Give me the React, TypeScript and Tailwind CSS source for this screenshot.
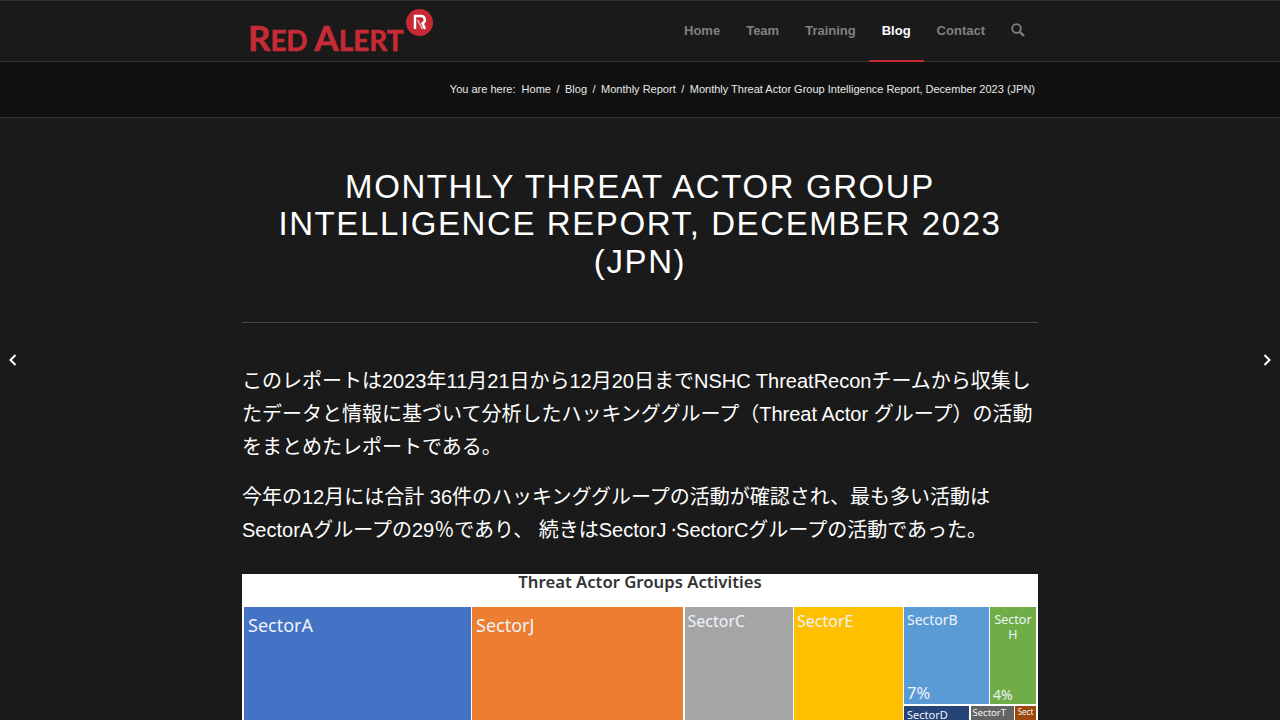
import React from "react";

const sans = "font-['Liberation_Sans','Noto_Sans_CJK_JP',sans-serif]";

function Logo() {
  return (
    <div className="relative h-[61px] w-[200px] ml-[8px] shrink-0">
      <div className="absolute left-[-2px] top-[14px] flex items-baseline font-['Lato','Liberation_Sans',sans-serif] font-bold text-[#c62b35] leading-[44px] whitespace-nowrap [-webkit-text-stroke:0.6px_#c62b35]">
        <span className="text-[35px]">R</span>
        <span className="text-[28px] tracking-[-0.3px]">ED</span>
        <span className="text-[35px] ml-[7px]">A</span>
        <span className="text-[28px]">LERT</span>
      </div>
      <svg className="absolute left-[156px] top-[8px]" width="27" height="27" viewBox="0 0 27 27">
        <circle cx="13.5" cy="13.5" r="13.5" fill="#c62b35" />
        <path d="M9 20V7h6a3.8 3.8 0 0 1 1.5 7.3L19 20" fill="none" stroke="#fff" strokeWidth="2.4" />
        <path d="M11.5 11l5 9" stroke="#e9b7ba" strokeWidth="1.5" />
      </svg>
    </div>
  );
}

function NavItem({ label, active }: { label: string; active?: boolean }) {
  return (
    <div
      className={`h-[61px] px-[13px] flex items-center border-b-2 ${
        active ? "border-[#c62b35] text-white" : "border-transparent text-[#808080]"
      } text-[13px] font-bold`}
    >
      {label}
    </div>
  );
}

function Tile({
  label,
  cls,
  text = "text-[18px]",
  pct,
  pctCls = "text-[16.5px]",
}: {
  label: string;
  cls: string;
  text?: string;
  pct?: string;
  pctCls?: string;
}) {
  return (
    <div className={`relative overflow-hidden leading-none ${cls} ${text}`}>
      <div className="whitespace-pre-line">{label}</div>
      {pct && <div className={`absolute left-[3px] bottom-[2px] leading-none ${pctCls}`}>{pct}</div>}
    </div>
  );
}

function Treemap() {
  return (
    <div className="w-[796px] h-[146px] bg-white shrink-0 font-['Noto_Sans','Open_Sans',sans-serif]">
      <div className="h-[33px] text-center text-[#333] text-[16.7px] font-semibold leading-[16px]">
        Threat Actor Groups Activities
      </div>
      <div className="flex gap-[1.5px] pl-[2px] pr-[2px] h-[113px] text-[#eef3fb]">
        <Tile label="SectorA" cls="w-[226.5px] bg-[#4472c4] pt-[9px] px-[4px]" />
        <Tile label="SectorJ" cls="w-[211px] bg-[#ed7d31] pt-[9px] px-[4px]" />
        <Tile label="SectorC" cls="w-[108px] bg-[#a5a5a5] px-[3px]" text="text-[16px] pt-[6px]" />
        <Tile label="SectorE" cls="w-[108.5px] bg-[#ffc000] px-[3px]" text="text-[16px] pt-[6px]" />
        <div className="flex-1 flex flex-col gap-[2px] min-w-0">
          <div className="flex gap-[1.5px] h-[98px]">
            <Tile label="SectorB" cls="w-[84.5px] bg-[#5b9bd5] pt-[6px] px-[3px]" text="text-[14px]" pct="7%" />
            <Tile
              label={"Sector\nH"}
              cls="flex-1 bg-[#70ad47] pt-[5px] text-center !leading-[15px]"
              text="text-[12.5px]"
              pct="4%"
              pctCls="text-[14px]"
            />
          </div>
          <div className="flex gap-[1.5px] flex-1">
            <Tile label="SectorD" cls="w-[65px] bg-[#264478] pt-[3px] px-[3px]" text="text-[11px]" />
            <Tile label="SectorT" cls="w-[43px] bg-[#636363] pt-[2px] px-[2px]" text="text-[9.5px]" />
            <Tile label="Sect" cls="flex-1 bg-[#9e480e] pt-[2px] text-center" text="text-[8px]" />
          </div>
        </div>
      </div>
    </div>
  );
}

function Side({ left }: { left?: boolean }) {
  return (
    <div
      className={`absolute top-[305px] ${
        left ? "left-0" : "right-0"
      } w-[30px] h-[110px] bg-[#191919] flex items-center ${left ? "justify-start pl-[9px]" : "justify-end pr-[9px]"}`}
    >
      <svg width="8" height="12" viewBox="0 0 8 12" fill="none" stroke="#fff" strokeWidth="2">
        <path d={left ? "M6.5 1L1.5 6l5 5" : "M1.5 1l5 5-5 5"} />
      </svg>
    </div>
  );
}

export default function App() {
  return (
    <div className={`relative w-[1280px] h-[720px] overflow-hidden bg-[#1a1a1a] text-white ${sans}`}>
      <header className="h-[62px] border-t border-b border-[#333333] bg-[#1a1a1a]">
        <div className="w-[796px] mx-auto flex justify-between h-[61px]">
          <Logo />
          <nav className="flex items-start -mr-[1px]">
            <NavItem label="Home" />
            <NavItem label="Team" />
            <NavItem label="Training" />
            <NavItem label="Blog" active />
            <NavItem label="Contact" />
            <div className="h-[60px] w-[41px] pl-[13px] flex items-center text-[#808080]">
              <svg width="14" height="14" viewBox="0 0 14 14" fill="none" stroke="currentColor" className="mb-[2px]">
                <circle cx="5.5" cy="5.5" r="4.3" strokeWidth="1.8" />
                <path d="M8.8 8.8L13 13" strokeWidth="2.4" />
              </svg>
            </div>
          </nav>
        </div>
      </header>
      <div className="h-[56px] bg-[#111111] border-b border-[#333333]">
        <div className="w-[796px] mx-auto h-full flex items-center justify-end pr-[3px] text-[11px] text-[#e8e8e8] whitespace-pre">
          <span>You are here:  </span>
          <span>Home</span>
          <span className="mx-[5.5px]">/</span>
          <span>Blog</span>
          <span className="mx-[5.5px]">/</span>
          <span>Monthly Report</span>
          <span className="mx-[5.5px]">/</span>
          <span>Monthly Threat Actor Group Intelligence Report, December 2023 (JPN)</span>
        </div>
      </div>
      <main className="w-[796px] mx-auto flex flex-col">
        <h1 className="mt-[50px] text-center text-[33px] leading-[37.33px] font-normal tracking-[1.6px] uppercase text-white">
          Monthly Threat Actor Group
          <br />
          Intelligence Report, December 2023
          <br />
          (JPN)
        </h1>
        <div className="mt-[42px] h-px bg-[#444444]" />
        <div className="mt-[42px] text-[20px] leading-[33px] text-white">
          <p className="whitespace-nowrap">
            このレポートは2023年11月21日から12月20日までNSHC ThreatReconチームから収集し
            <br />
            たデータと情報に基づいて分析したハッキンググループ（Threat Actor グループ）の活動
            <br />
            をまとめたレポートである。
          </p>
          <p className="mt-[17px] whitespace-nowrap">
            今年の12月には合計 36件のハッキンググループの活動が確認され、最も多い活動は
            <br />
            SectorAグループの29％であり、 続きはSectorJ <span className="-ml-[1px]">⸱</span>SectorCグループの活動であった。
          </p>
        </div>
        <div className="mt-[27px]">
          <Treemap />
        </div>
      </main>
      <Side left />
      <Side />
    </div>
  );
}
